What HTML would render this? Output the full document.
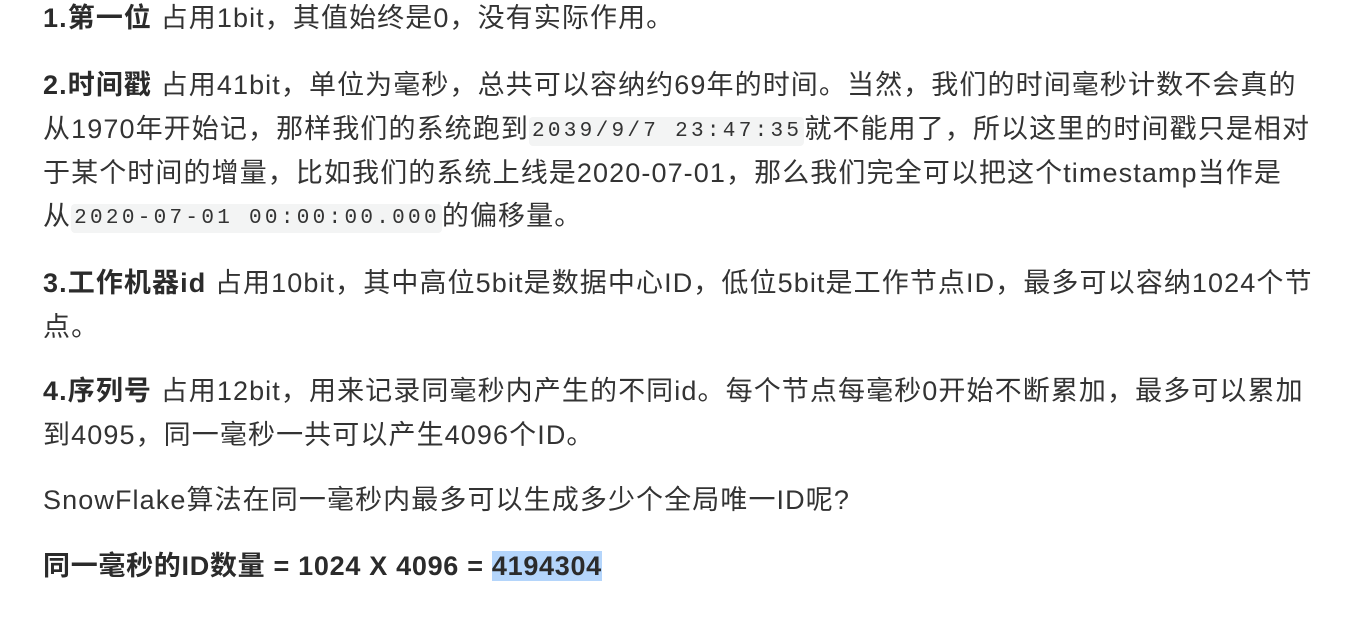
<!DOCTYPE html>
<html><head><meta charset="utf-8"><style>
body{margin:0;width:1345px;height:635px;background:#fff;overflow:hidden;position:relative;font-family:"Liberation Sans","Noto Sans CJK SC",sans-serif;color:#333;font-size:27px;letter-spacing:1.1px}
.l{position:absolute;left:43px;white-space:nowrap;line-height:36px}
b{font-weight:bold;color:#2b2b2b}
code{font-family:"Liberation Mono","DejaVu Sans Mono",monospace;font-size:21px;letter-spacing:3.3px;background:#f3f4f4;border-radius:4px;padding:3px 2px 3px 3px;color:#333;vertical-align:2px}
.hl{background:#b4d5fb}
.last{letter-spacing:0.7px}
</style></head><body>
<div class="l" style="top:0px"><b>1.第一位</b> 占用1bit，其值始终是0，没有实际作用。</div>
<div class="l" style="top:67px"><b>2.时间戳</b> 占用41bit，单位为毫秒，总共可以容纳约69年的时间。当然，我们的时间毫秒计数不会真的</div>
<div class="l" style="top:111px">从1970年开始记，那样我们的系统跑到<code>2039/9/7 23:47:35</code>就不能用了，所以这里的时间戳只是相对</div>
<div class="l" style="top:155px">于某个时间的增量，比如我们的系统上线是2020-07-01，那么我们完全可以把这个timestamp当作是</div>
<div class="l" style="top:198px">从<code>2020-07-01 00:00:00.000</code>的偏移量。</div>
<div class="l" style="top:265px"><b>3.工作机器id</b> 占用10bit，其中高位5bit是数据中心ID，低位5bit是工作节点ID，最多可以容纳1024个节</div>
<div class="l" style="top:309px">点。</div>
<div class="l" style="top:373px"><b>4.序列号</b> 占用12bit，用来记录同毫秒内产生的不同id。每个节点每毫秒0开始不断累加，最多可以累加</div>
<div class="l" style="top:417px">到4095，同一毫秒一共可以产生4096个ID。</div>
<div class="l" style="top:482px">SnowFlake算法在同一毫秒内最多可以生成多少个全局唯一ID呢?</div>
<div class="l last" style="top:548px"><b>同一毫秒的ID数量 = 1024 X 4096 = <span class="hl">4194304</span></b></div>
</body></html>
